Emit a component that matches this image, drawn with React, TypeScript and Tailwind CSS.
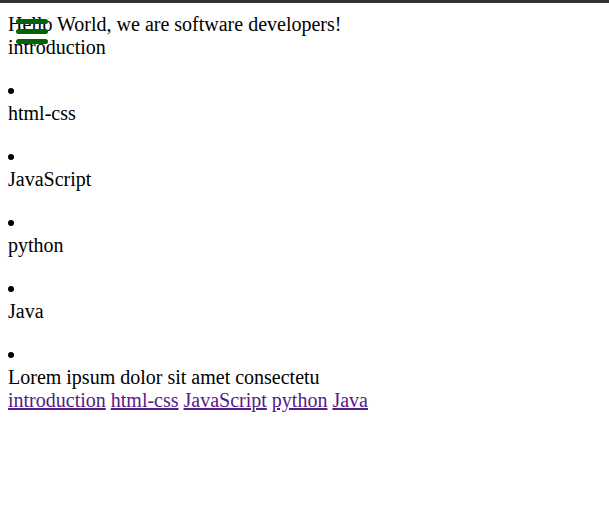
const topics = ["html-css", "JavaScript", "python", "Java"];
const links = ["introduction", "html-css", "JavaScript", "python", "Java"];

function Dot() {
  return (
    <div className="flex h-[23px] items-center pl-[8px] -ml-[8px]">
      <span className="ml-[0px] block h-[6px] w-[6px] rounded-full bg-black" />
    </div>
  );
}

export default function App() {
  return (
    <div className="min-h-[507px] bg-white font-['Liberation_Serif','Times_New_Roman',serif] text-[20px] leading-[23px] text-black">
      <div className="h-[3px] bg-[#333]" />
      <div className="relative px-2 pt-[10px]">
        {/* hamburger sits over the heading */}
        <div className="absolute left-[16px] top-[16px] flex flex-col gap-[5px]">
          <span className="block h-[5px] w-[32px] rounded-[3px] bg-[#006400]" />
          <span className="block h-[5px] w-[32px] rounded-[3px] bg-[#006400]" />
          <span className="block h-[5px] w-[32px] rounded-[3px] bg-[#006400]" />
        </div>
        <p>Hello World, we are software developers!</p>
        <p>introduction</p>
        {topics.map((t) => (
          <div key={t} className="mt-5">
            <Dot />
            <p>{t}</p>
          </div>
        ))}
        <div className="mt-5">
          <Dot />
          <p>Lorem ipsum dolor sit amet consectetu</p>
        </div>
        <p className="flex gap-[5px]">
          {links.map((l) => (
            <a key={l} href="#" className="text-[#551a8b] underline">
              {l}
            </a>
          ))}
        </p>
      </div>
    </div>
  );
}
